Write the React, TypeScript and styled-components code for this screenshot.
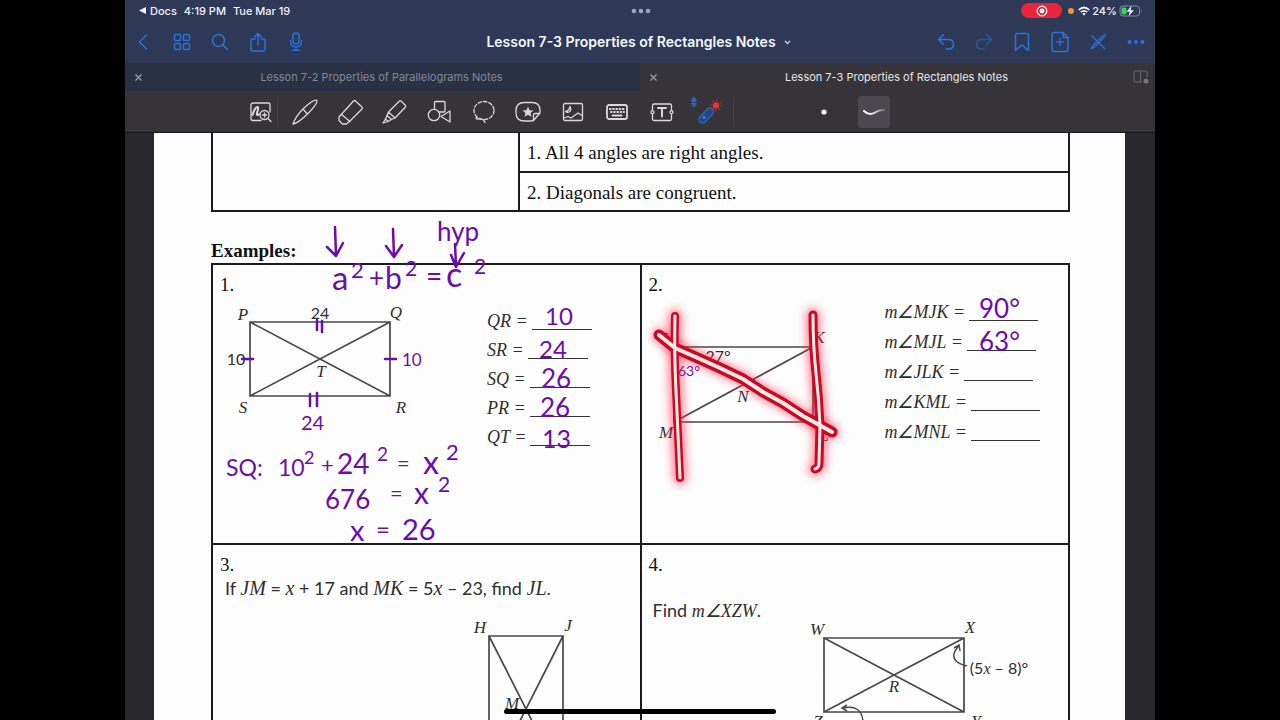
import React from "react";
import styled, { createGlobalStyle } from "styled-components";

const UI = `Inter, "Liberation Sans", sans-serif`;
const SERIF = `"Liberation Serif", "Times New Roman", serif`;
const ROUND = `Lato, "Open Sans", sans-serif`;
const INK = "#6a0dad";
const PRINT = "#2e2e30";

const GlobalStyle = createGlobalStyle`
  * { box-sizing: border-box; }
  body { margin: 0; background: #000; }
`;

const Screen = styled.div`
  height: 100vh;
  padding: 0 125px;
  background: #000;
  overflow: hidden;
  font-family: ${UI};
`;

const Device = styled.div`
  position: relative;
  height: 100%;
  display: flex;
  flex-direction: column;
  background: #29282d;
`;

const Header = styled.header`
  background: #2d3957;
  flex: none;
`;

const StatusBar = styled.div`
  display: grid;
  grid-template-columns: 1fr auto 1fr;
  align-items: center;
  height: 21px;
  padding: 0 12px 0 14px;
  color: #f1f4fb;
  font-size: 11px;
  font-weight: 500;
  line-height: 20px;
`;

const StatusGroup = styled.div<{ $end?: boolean }>`
  display: flex;
  align-items: center;
  gap: ${(p) => (p.$end ? 2 : 7)}px;
  justify-content: ${(p) => (p.$end ? "flex-end" : "flex-start")};
`;

const BackToApp = styled.a`
  display: flex;
  align-items: center;
  gap: 4px;
  color: inherit;
  text-decoration: none;
`;

const RecordPill = styled.button`
  display: flex;
  align-items: center;
  justify-content: center;
  width: 41px;
  height: 15px;
  margin-right: 4px;
  padding: 0;
  border: 0;
  border-radius: 8px;
  background: #e8253b;
`;

const MicDot = styled.span`
  width: 6px;
  height: 6px;
  margin-right: 2px;
  border-radius: 50%;
  background: #ee9a33;
`;

const NavBar = styled.nav`
  display: grid;
  grid-template-columns: 1fr auto 1fr;
  align-items: center;
  height: 42px;
`;

const NavGroup = styled.div<{ $end?: boolean }>`
  display: flex;
  justify-content: ${(p) => (p.$end ? "flex-end" : "flex-start")};
`;

const NavButton = styled.button<{ $dim?: boolean }>`
  display: flex;
  align-items: center;
  justify-content: center;
  width: 38px;
  height: 36px;
  padding: 0;
  border: 0;
  background: none;
  color: #2c72d6;
  opacity: ${(p) => (p.$dim ? 0.5 : 1)};
`;

const TitleButton = styled.button`
  display: flex;
  align-items: center;
  gap: 8px;
  padding: 0 3px 0 0;
  border: 0;
  background: none;
  color: #f6f8fd;
  font: 600 14px/20px ${UI};
  white-space: nowrap;
`;

const Tabs = styled.div`
  display: grid;
  grid-template-columns: 1fr 1fr;
  height: 28px;
`;

const Tab = styled.div<{ $active?: boolean }>`
  display: grid;
  grid-template-columns: 26px 1fr 28px;
  align-items: center;
  background: ${(p) => (p.$active ? "#363438" : "#2b3144")};
  color: ${(p) => (p.$active ? "#e6e6ea" : "#7f879b")};
`;

const TabButton = styled.button<{ $quiet?: boolean }>`
  display: flex;
  align-items: center;
  justify-content: center;
  padding: 0;
  border: 0;
  background: none;
  color: ${(p) => (p.$quiet ? "#a3a4ad" : "inherit")};
  font: 400 11px/20px ${UI};
  white-space: nowrap;
`;

const Toolbar = styled.div`
  display: flex;
  align-items: center;
  flex: none;
  height: 41px;
  padding-left: 113px;
  background: #363438;
`;

const Tools = styled.div`
  display: flex;
  width: 491px;
`;

const ToolButton = styled.button`
  flex: 1;
  display: flex;
  align-items: center;
  justify-content: center;
  height: 30px;
  padding: 0;
  border: 0;
  background: none;
  color: #d9d9dc;
`;

const ToolSlot = styled.div<{ $ruled?: boolean }>`
  flex: 1;
  display: flex;
  background: linear-gradient(#413f44, #413f44) 39px 0 / 1px ${(p) => (p.$ruled ? "100%" : "0")} no-repeat;
`;

const Divider = styled.span`
  width: 1px;
  height: 30px;
  margin-left: 4px;
  background: #413f44;
`;

const PenOptions = styled.div`
  display: flex;
  align-items: center;
  gap: 18px;
  margin-left: 74px;
`;

const PenOption = styled.button<{ $selected?: boolean }>`
  display: flex;
  align-items: center;
  justify-content: center;
  width: 32px;
  height: 32px;
  padding: 0;
  border: 0;
  border-radius: 4px;
  background: ${(p) => (p.$selected ? "#4b494f" : "none")};
`;

const Viewport = styled.main`
  flex: 1;
  min-height: 0;
  padding: 0 30px 0 29px;
  overflow: hidden;
  border-top: 1px solid #17171a;
`;

const Paper = styled.article`
  min-height: 100%;
  padding: 0 55px 0 57px;
  background: #fdfdfe;
  color: #111;
  font: 400 19px/22px ${SERIF};
`;

const Properties = styled.table`
  width: 100%;
  table-layout: fixed;
  border-collapse: collapse;
`;

const PropertyCell = styled.td<{ $lead?: boolean }>`
  width: ${(p) => (p.$lead ? "307px" : "auto")};
  height: 39px;
  padding: 2px 7px 0;
  border: 2px solid #1c1c1e;
  border-top-width: ${(p) => (p.$lead ? 0 : 2)}px;

  tr:first-child > & {
    border-top: 0;
  }
`;

const Heading = styled.h2`
  margin: 26px 0 0;
  font: 700 19px/25px ${SERIF};
`;

const Problems = styled.section`
  display: grid;
  grid-template-columns: 1fr 1fr;
  gap: 2px;
  padding: 2px;
  background: #1c1c1e;
`;

const Problem = styled.section`
  position: relative;
  min-height: 278px;
  padding: 9px 6px 0 7px;
  background: #fdfdfe;
`;

const ProblemNumber = styled.h3`
  margin: 0;
  font: 400 19px/22px ${SERIF};
`;

const Prompt = styled.p<{ $spaced?: boolean }>`
  margin: ${(p) => (p.$spaced ? "22px 0 0 4px" : "0 0 0 5px")};
  color: ${PRINT};
  font: 400 18px/24px ${ROUND};
  white-space: nowrap;

  em {
    font: italic 400 ${(p) => (p.$spaced ? 18 : 20)}px/22px ${SERIF};
  }
`;

const ProblemBody = styled.div`
  display: flex;
  align-items: flex-start;
  padding-left: 5px;
`;

const Figure = styled.svg<{ $indent?: number }>`
  flex: none;
  display: block;
  margin-left: ${(p) => p.$indent ?? 0}px;
  overflow: visible;
  fill: none;
  stroke: #48484a;
  stroke-width: 1.7;

  text {
    fill: ${PRINT};
    stroke: none;
    text-anchor: middle;
    font: italic 400 17px ${SERIF};
  }
  text.measure {
    font: 400 16px ${ROUND};
  }
`;

const Answers = styled.ul<{ $pitch: number; $indent: number; $drop: number }>`
  margin: ${(p) => p.$drop}px 0 0 ${(p) => p.$indent}px;
  padding: 0;
  list-style: none;
  color: ${PRINT};
  font: italic 400 18px ${SERIF};
  line-height: ${(p) => p.$pitch}px;
  white-space: nowrap;
`;

const Blank = styled.span<{ $width: number }>`
  display: inline-block;
  width: ${(p) => p.$width}px;
  height: 2px;
  margin: 0 0 -3px 4px;
  border-bottom: 1px solid #333;
`;

const InkLayer = styled.svg`
  position: absolute;
  left: 0;
  top: -51px;
  overflow: visible;
  pointer-events: none;
  fill: none;
  stroke: ${INK};
  stroke-width: 2.5;
  stroke-linecap: round;
  stroke-linejoin: round;

  text {
    fill: ${INK};
    stroke: none;
    font-family: ${ROUND};
  }
`;

const HomeIndicator = styled.div`
  position: absolute;
  bottom: 6px;
  left: 50%;
  width: 272px;
  height: 5px;
  margin-left: -136px;
  border-radius: 3px;
  background: #000;
`;

type IconProps = { children: React.ReactNode; size?: number; weight?: number };

const Icon = ({ children, size = 24, weight = 1.5 }: IconProps) => (
  <svg
    width={size}
    height={size}
    viewBox={`0 0 ${size} ${size}`}
    fill="none"
    stroke="currentColor"
    strokeWidth={weight}
    strokeLinecap="round"
    strokeLinejoin="round"
    aria-hidden="true"
  >
    {children}
  </svg>
);

const navLeft = [
  { label: "Back", art: <path d="M14.5 5 7.500 12l7 7" /> },
  {
    label: "Thumbnails",
    art: (
      <>
        <rect x="4.500" y="4.500" width="6" height="6" rx="1" />
        <rect x="13.500" y="4.500" width="6" height="6" rx="1" />
        <rect x="4.500" y="13.500" width="6" height="6" rx="1" />
        <rect x="13.500" y="13.500" width="6" height="6" rx="1" />
      </>
    ),
  },
  {
    label: "Search",
    art: (
      <>
        <circle cx="10.500" cy="10.500" r="6" />
        <path d="m15 15 4.500 4.500" />
      </>
    ),
  },
  {
    label: "Share",
    art: <path d="M9 9H6.500Q5 9 5 10.500v9Q5 21 6.500 21h11q1.500 0 1.500-1.500v-9Q19 9 17.500 9H15M12 15V3.500M8.500 7 12 3.500 15.500 7" />,
  },
  {
    label: "Record audio",
    art: (
      <>
        <rect x="9" y="3" width="6" height="11" rx="3" />
        <path d="M6.500 10.500v1q0 5.500 5.500 5.500t5.500-5.500v-1M12 17v3M8.500 20.200h7" />
      </>
    ),
  },
];

const navRight = [
  { label: "Undo", art: <path d="M9.500 4.500 4.500 9.500l5 5M5 9.500h9.500q5 0 5 4.750T14.500 19H12" /> },
  { label: "Redo", dim: true, art: <path d="M14.500 4.500l5 5-5 5M19 9.500H9.500q-5 0-5 4.750T9.500 19H12" /> },
  { label: "Bookmark", art: <path d="M5.500 5q0-1.500 1.500-1.500h10q1.500 0 1.500 1.500v15.500L12 15l-6.500 5.500z" /> },
  {
    label: "Add page",
    art: <path d="M6 2.500h9l5 5V19.500Q20 21.500 18 21.500H6Q4 21.500 4 19.500v-15Q4 2.500 6 2.500zM15 2.500v5h5M12 8.500v7M8.500 12h7" />,
  },
  {
    label: "Read only",
    art: <path d="m5.500 5.500 13 13M5.500 18.500l1-2.500L16.500 6l1.500 1.500L8 17.500zM18 4.500l1.500 1.500" strokeWidth="1.300" />,
  },
  {
    label: "More",
    art: (
      <g fill="currentColor" stroke="none">
        <circle cx="5.500" cy="12" r="1.900" />
        <circle cx="12" cy="12" r="1.900" />
        <circle cx="18.500" cy="12" r="1.900" />
      </g>
    ),
  },
];

const tools = [
  {
    label: "Zoom window",
    art: (
      <>
        <path d="M24 14V6.500Q24 5 22.500 5h-15Q5 5 5 7v13.500Q5 22.500 7 22.500h8" />
        <path d="M6.500 17c1.500-5 3.500-8 5-8s0 4-.5 6 .5 3 2 1" strokeWidth="2" />
        <circle cx="18.500" cy="17" r="4.500" />
        <path d="M16.500 17h4M18.500 15v4M22 20.500l3 3" />
      </>
    ),
  },
  {
    label: "Pen",
    art: <path d="M2 26C3 22 8 14.500 13 10 18 5.500 24 1.500 25.800 2.400 27 4 21.500 11 17.500 15 12.500 20 6 25.500 2 26zM12 11l4.300 5" />,
  },
  {
    label: "Eraser",
    art: <path d="M19.500 3 26 9q1 1 0 2L14.500 22.500 10.500 26H6.500L3 22.500V19L17.500 3q1-1 2 0zM5.500 16.500l8.500 7" />,
  },
  {
    label: "Highlighter",
    art: <path d="M21 3 25.500 7.500q.5 1 0 1.500L15 20l-3.500 1.500-4.500-4 1.500-3.500L19.500 3q1-.8 1.500 0zM8.500 14l6.500 6M7 17.500 5.500 21l2.500 2.500 3.500-2M5.500 21l-2.500 4 5-1.500" />,
  },
  {
    label: "Shapes",
    art: (
      <>
        <rect x="9.500" y="3.500" width="10.500" height="10.500" rx="1" />
        <circle cx="9" cy="17" r="5.700" fill="#363438" />
        <path d="M25 13v11l-9-5.500z" fill="#363438" />
      </>
    ),
  },
  {
    label: "Lasso",
    art: (
      <>
        <ellipse cx="14" cy="12.500" rx="10" ry="9" strokeDasharray="3.500 2" />
        <path d="M6.500 18.500q-1.500 3 2 2.500 5-.5 6.500 3.500" />
      </>
    ),
  },
  {
    label: "Sticker",
    art: (
      <>
        <path d="M10.500 4.500h7.500q8 0 8 8v1.500q0 1-1.500 1.500H21q-1.500 0-1.500 1.500V21q0 2-2 2h-7Q2 23 2 15v-2.500Q2 4.500 10.500 4.500zM19.500 22.500 26 15" />
        <path d="m14 8.500 1.500 3.700 4 .3-3 2.500 1 3.800-3.500-2.100-3.500 2.100 1-3.800-3-2.500 4-.3z" fill="currentColor" stroke="none" />
      </>
    ),
  },
  {
    label: "Image",
    art: (
      <>
        <rect x="4.500" y="5.500" width="19" height="17" rx="1.500" />
        <path d="M11 8.500q2 4-1 5.500-2 1-3.500-.5 3.500-.5 4.500-5zM5 20l4-1.500 3 1.500 7-5 4.500 3" />
      </>
    ),
  },
  {
    label: "Keyboard",
    art: (
      <>
        <rect x="4" y="7" width="20" height="14" rx="2" strokeWidth="1.800" />
        <path d="M7 11h14M8 14h13" strokeDasharray="0.600 2.600" strokeWidth="2.200" />
        <path d="M9.500 17.500h9" strokeWidth="2" />
      </>
    ),
  },
  {
    label: "Text box",
    art: (
      <>
        <path d="M4.500 12V7.500Q4.500 6 6 6h16q1.500 0 1.500 1.500V12M4.500 16.500v4.500q0 1.500 1.500 1.500h16q1.500 0 1.500-1.500v-4.500" />
        <circle cx="4.500" cy="14.200" r="1.500" />
        <circle cx="23.500" cy="14.200" r="1.500" />
        <path d="M10 10h8M14 10v8.500" strokeWidth="2" />
      </>
    ),
  },
];

const LaserIcon = () => (
  <svg width="34" height="34" viewBox="0 0 34 34" fill="none" strokeLinecap="round" strokeLinejoin="round" aria-hidden="true">
    <path d="M1.500 5l4.500 4-2.500 2.500V2.500L6 5l-4.500 4" stroke="#1f6fe0" strokeWidth="1.400" />
    <path d="m12.500 24.500 7.500-8" stroke="#2c66b8" strokeWidth="8.500" />
    <path d="m12.500 24.500 7.500-8" stroke="#27487c" strokeWidth="6" />
    <circle cx="14" cy="22.500" r="1.500" fill="#2d7df0" />
    <circle cx="26" cy="10.500" r="3.200" fill="#ec2f3c" />
    <circle cx="26" cy="10.500" r="5.200" stroke="#ec2f3c" strokeWidth="1.200" strokeDasharray="0.300 3.784" />
  </svg>
);

type Note = [text: string, x: number, y: number, size: number];

const workNotes: Note[] = [
  ["hyp", 437, 240, 26],
  ["a", 332, 289, 33],
  ["2", 351, 277, 22],
  ["+", 369, 286, 26],
  ["b", 385, 288, 30],
  ["2", 405, 275, 21],
  ["=", 426, 285, 28],
  ["c", 446, 286, 34],
  ["2", 474, 273, 21],
  ["10", 402, 365, 17],
  ["24", 301, 429, 20],
  ["SQ:", 226, 475, 23],
  ["10", 278, 475, 23],
  ["2", 304, 463, 18],
  ["+", 321, 472, 22],
  ["24", 337, 473, 28],
  ["2", 377, 460, 19],
  ["=", 397, 470, 22],
  ["x", 423, 473, 32],
  ["2", 446, 459, 22],
  ["676", 325, 508, 26],
  ["=", 390, 500, 22],
  ["x", 414, 503, 30],
  ["2", 438, 491, 21],
  ["x", 350, 540, 29],
  ["=", 376, 537, 24],
  ["26", 402, 539, 29],
  ["10", 545, 324, 24],
  ["24", 539, 357, 24],
  ["26", 541, 387, 26],
  ["26", 540, 416, 26],
  ["13", 542, 447, 25],
];

const angleNotes: Note[] = [
  ["90°", 979, 317, 26],
  ["63°", 979, 350, 26],
  ["63°", 678, 375, 14],
];

const Notes = ({ items }: { items: Note[] }) => (
  <>
    {items.map(([text, x, y, size]) => (
      <text key={`${x}-${y}`} x={x} y={y} fontSize={size}>
        {text}
      </text>
    ))}
  </>
);

const laserTrails = [
  { d: "M675 315Q674 350 676 390T680 477", core: 3, edge: 5 },
  { d: "M813 314Q813 345 816 372T820 425L819 462Q819 467 815 468", core: 3, edge: 6 },
  { d: "M659 334L675 347 700 358 720 367 743 378 763 391 783 402 803 415 832 431", core: 4, edge: 7 },
];

const CloseIcon = () => (
  <svg width="7" height="7" viewBox="0 0 7 7" stroke="currentColor" strokeWidth="1.100" aria-hidden="true">
    <path d="m.5.5 6 6M6.500.5l-6 6" />
  </svg>
);

export default function App() {
  return (
    <Screen>
      <GlobalStyle />
      <Device>
        <Header>
          <StatusBar>
            <StatusGroup>
              <BackToApp href="#docs">
                <svg width="7" height="7" viewBox="0 0 7 7" fill="currentColor" aria-hidden="true">
                  <path d="M7 0v7L0 3.500z" />
                </svg>
                Docs
              </BackToApp>
              <span>4:19 PM</span>
              <span>Tue Mar 19</span>
            </StatusGroup>
            <svg width="20" height="6" viewBox="0 0 20 6" fill="#9aa5c4" aria-hidden="true">
              <circle cx="3" cy="3" r="2.300" />
              <circle cx="10" cy="3" r="2.300" />
              <circle cx="17" cy="3" r="2.300" />
            </svg>
            <StatusGroup $end>
              <RecordPill aria-label="Screen recording">
                <svg width="12" height="12" viewBox="0 0 12 12" fill="none" stroke="#fff" strokeWidth="1.300" aria-hidden="true">
                  <circle cx="6" cy="6" r="4.800" />
                  <circle cx="6" cy="6" r="2.400" fill="#fff" stroke="none" />
                </svg>
              </RecordPill>
              <MicDot />
              <svg width="12" height="10" viewBox="0 0 12 10" fill="none" stroke="#fff" strokeWidth="1.700" aria-hidden="true">
                <path d="M.8 3.800q5.200-4.600 10.400 0M2.800 6.200q3.200-2.800 6.400 0" />
                <path d="M4.300 7.700q1.700-1.300 3.400 0L6 9.600z" fill="#fff" stroke="none" />
              </svg>
              <span>24%</span>
              <svg width="24" height="12" viewBox="0 0 24 12" aria-hidden="true">
                <rect x="1" y="1" width="19.500" height="10" rx="3" fill="none" stroke="#7f8aa8" />
                <rect x="2.500" y="2.500" width="5" height="7" rx="1.500" fill="#3fd25f" />
                <path d="M22 4.500q1.500 1.500 0 3z" fill="#7f8aa8" />
                <path d="M12.500.8 7.500 6.800h3.200L9.600 11.300l5.200-6h-3.300z" fill="#fff" />
              </svg>
            </StatusGroup>
          </StatusBar>

          <NavBar>
            <NavGroup>
              {navLeft.map((item) => (
                <NavButton key={item.label} aria-label={item.label}>
                  <Icon>{item.art}</Icon>
                </NavButton>
              ))}
            </NavGroup>
            <TitleButton>
              Lesson 7-3 Properties of Rectangles Notes
              <svg width="7" height="5" viewBox="0 0 7 5" fill="none" stroke="#c8d0e4" strokeWidth="1.300" aria-hidden="true">
                <path d="m1 1 2.500 2.500L6 1" />
              </svg>
            </TitleButton>
            <NavGroup $end>
              {navRight.map((item) => (
                <NavButton key={item.label} aria-label={item.label} $dim={item.dim}>
                  <Icon>{item.art}</Icon>
                </NavButton>
              ))}
            </NavGroup>
          </NavBar>

          <Tabs>
            <Tab>
              <TabButton aria-label="Close Lesson 7-2" $quiet>
                <CloseIcon />
              </TabButton>
              <TabButton>Lesson 7-2 Properties of Parallelograms Notes</TabButton>
            </Tab>
            <Tab $active>
              <TabButton aria-label="Close Lesson 7-3" $quiet>
                <CloseIcon />
              </TabButton>
              <TabButton>Lesson 7-3 Properties of Rectangles Notes</TabButton>
              <TabButton aria-label="Split view">
                <svg width="16" height="14" viewBox="0 0 16 14" fill="none" stroke="#66646a" strokeWidth="1.200" aria-hidden="true">
                  <path d="M9 12H3q-2 0-2-2V3q0-2 2-2h9q2 0 2 2v4M7.500 1v11" />
                  <circle cx="13" cy="11" r="2.500" fill="#77757b" stroke="none" />
                </svg>
              </TabButton>
            </Tab>
          </Tabs>
        </Header>

        <Toolbar role="toolbar">
          <Tools>
            {tools.map((tool, index) => (
              <ToolSlot key={tool.label} $ruled={index === 0}>
                <ToolButton aria-label={tool.label}>
                  <Icon size={28} weight={1.300}>
                    {tool.art}
                  </Icon>
                </ToolButton>
              </ToolSlot>
            ))}
            <ToolSlot>
              <ToolButton aria-label="Laser pointer">
                <LaserIcon />
              </ToolButton>
            </ToolSlot>
          </Tools>
          <Divider />
          <PenOptions>
            <PenOption aria-label="Dot">
              <svg width="6" height="6" viewBox="0 0 6 6" aria-hidden="true">
                <circle cx="3" cy="3" r="2.600" fill="#fff" />
              </svg>
            </PenOption>
            <PenOption aria-label="Trail" $selected>
              <svg width="24" height="10" viewBox="0 0 24 10" fill="none" strokeLinecap="round" aria-hidden="true">
                <defs>
                  <linearGradient id="fade" x1="0" x2="1" y1="0" y2="0">
                    <stop offset="0" stopColor="#fff" />
                    <stop offset="0.500" stopColor="#e6e6e8" />
                    <stop offset="1" stopColor="#77757b" />
                  </linearGradient>
                </defs>
                <path d="M2 4q5 5 11 1.500Q18 2.500 22 3" stroke="url(#fade)" strokeWidth="2" />
              </svg>
            </PenOption>
          </PenOptions>
        </Toolbar>

        <Viewport>
          <Paper>
            <Properties>
              <tbody>
                <tr>
                  <PropertyCell $lead rowSpan={2} />
                  <PropertyCell>1. All 4 angles are right angles.</PropertyCell>
                </tr>
                <tr>
                  <PropertyCell>2. Diagonals are congruent.</PropertyCell>
                </tr>
              </tbody>
            </Properties>

            <Heading>Examples:</Heading>

            <Problems>
              <Problem>
                <ProblemNumber>1.</ProblemNumber>
                <ProblemBody>
                  <Figure width="215" height="130" viewBox="225 296 215 130">
                    <path d="M250 322H390V396H250zL390 396M390 322 250 396" />
                    <text x="243" y="320">P</text>
                    <text x="396" y="318">Q</text>
                    <text x="321" y="377">T</text>
                    <text x="243" y="413">S</text>
                    <text x="401" y="413">R</text>
                    <text className="measure" x="320" y="319">24</text>
                    <text className="measure" x="236" y="365">10</text>
                  </Figure>
                  <Answers $pitch={29} $indent={47} $drop={11}>
                    {["QR", "SR", "SQ", "PR", "QT"].map((side) => (
                      <li key={side}>
                        {side} =<Blank $width={60} />
                      </li>
                    ))}
                  </Answers>
                </ProblemBody>
                <InkLayer width="428" height="330" viewBox="213 213 428 330">
                  <Notes items={workNotes} />
                  <path d="M335 226 336 254M327 246 336 255 343 242M393 228 394 255M386 245 394 256 402 244M455 243 456 265M451 254 456 266 464 252" />
                  <path d="M317 319V329M322 320V331M310 393V405M317 392V405M242 358H253M385 358H396" />
                </InkLayer>
              </Problem>

              <Problem>
                <ProblemNumber>2.</ProblemNumber>
                <ProblemBody>
                  <Figure width="200" height="150" viewBox="654 296 200 150">
                    <path d="M674 347H813V422H674zM813 347 674 422" />
                    <text x="664" y="344">J</text>
                    <text x="819" y="343">K</text>
                    <text x="743" y="402">N</text>
                    <text x="824" y="441">L</text>
                    <text x="666" y="438">M</text>
                    <text className="measure" x="718" y="362">27°</text>
                  </Figure>
                  <Answers $pitch={30} $indent={31} $drop={1}>
                    {["MJK", "MJL", "JLK", "KML", "MNL"].map((angle) => (
                      <li key={angle}>
                        m∠{angle} =<Blank $width={69} />
                      </li>
                    ))}
                  </Answers>
                </ProblemBody>
                <InkLayer width="428" height="330" viewBox="642 213 428 330">
                  <defs>
                    <filter id="glow" filterUnits="userSpaceOnUse" x="630" y="280" width="240" height="230">
                      <feGaussianBlur stdDeviation="4" />
                    </filter>
                  </defs>
                  <Notes items={angleNotes} />
                  {laserTrails.map((trail) => (
                    <path key={trail.d} d={trail.d} stroke="#ff2a48" strokeWidth="14" opacity="0.600" filter="url(#glow)" />
                  ))}
                  {laserTrails.map((trail) => (
                    <path key={trail.d} d={trail.d} stroke="#c90a25" strokeWidth={trail.core + trail.edge} />
                  ))}
                  {laserTrails.map((trail) => (
                    <path key={trail.d} d={trail.d} stroke="#ffe9e6" strokeWidth={trail.core} />
                  ))}
                </InkLayer>
              </Problem>

              <Problem>
                <ProblemNumber>3.</ProblemNumber>
                <Prompt>
                  If <em>JM</em> = <em>x</em> + 17 and <em>MK</em> = 5<em>x</em> – 23, find <em>JL</em>.
                </Prompt>
                <Figure $indent={250} width="110" height="180" viewBox="470 600 110 180">
                  <path d="M489 636H563V782H489zL563 782M563 636 489 782" />
                  <text x="480" y="633">H</text>
                  <text x="568" y="631">J</text>
                  <text x="512" y="709">M</text>
                </Figure>
              </Problem>

              <Problem>
                <ProblemNumber>4.</ProblemNumber>
                <Prompt $spaced>
                  Find <em>m∠XZW</em>.
                </Prompt>
                <Figure $indent={151} width="240" height="150" viewBox="800 622 240 150">
                  <path d="M824 638H964V712H824zL964 712M964 638 824 712" />
                  <path d="M967 666Q950 662 955 651L959 645M954 648 959 645 960 651" strokeWidth="1.500" />
                  <path d="M863 722Q862 704 843 708M847 705 842 708 847 711" strokeWidth="1.500" />
                  <text x="817" y="635">W</text>
                  <text x="970" y="633">X</text>
                  <text x="894" y="692">R</text>
                  <text x="818" y="727">Z</text>
                  <text x="976" y="727">Y</text>
                  <text className="measure" x="999" y="674">
                    (5<tspan fontFamily="Liberation Serif" fontStyle="italic">x</tspan> – 8)°
                  </text>
                </Figure>
              </Problem>
            </Problems>
          </Paper>
        </Viewport>
        <HomeIndicator />
      </Device>
    </Screen>
  );
}
